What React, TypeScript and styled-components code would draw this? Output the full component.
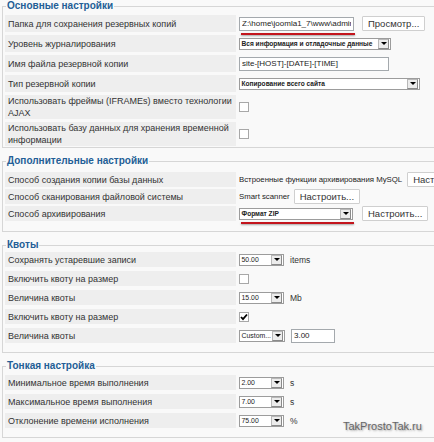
import React from "react";
import styled, { createGlobalStyle } from "styled-components";

const GlobalStyle = createGlobalStyle`
  html, body {
    margin: 0;
    padding: 0;
    background: #f9f9f9;
    overflow: hidden;
  }
  body {
    font-family: "Liberation Sans", Arial, sans-serif;
  }
`;

const Page = styled.div`
  position: relative;
  width: 480px;
  height: 442px;
  padding-left: 2px;
`;

const Fieldset = styled.fieldset<{ $pt: number; $pb: number }>`
  margin: 0 0 7px 0;
  padding: ${(p) => p.$pt}px 0 ${(p) => p.$pb}px 2px;
  border: 1px solid #d6d6d6;
  min-width: 0;
`;

const Legend = styled.legend`
  padding: 0 1px;
  margin-left: 1px;
  font: bold 10px/12px "Liberation Sans", Arial, sans-serif;
  color: #235e96;
`;

const Rows = styled.div<{ $gap: number }>`
  display: flex;
  flex-direction: column;
  gap: ${(p) => p.$gap}px;
`;

const Row = styled.div<{ $h: number }>`
  display: grid;
  grid-template-columns: 231px 1fr;
  column-gap: 3px;
  min-height: ${(p) => p.$h}px;
`;

const Label = styled.div`
  display: flex;
  align-items: center;
  padding: 0 3px;
  background: #eeeeee;
  font-size: 9px;
  line-height: 12px;
  color: #333;
`;

const Value = styled.div<{ $gap?: number }>`
  display: flex;
  align-items: center;
  gap: ${(p) => p.$gap ?? 6}px;
  font-size: 7.8px;
  color: #222;
  white-space: nowrap;
`;

const Marked = styled.span`
  position: relative;
  display: inline-flex;
`;

const RedLine = styled.span<{ $offset: number }>`
  position: absolute;
  left: 2px;
  right: -1px;
  bottom: -${(p) => p.$offset}px;
  height: 2px;
  background: #c3141c;
  box-shadow: 0 1px 2px rgba(0, 0, 0, 0.35);
`;

const TextInput = styled.input<{ $w: number }>`
  box-sizing: border-box;
  width: ${(p) => p.$w}px;
  height: 14px;
  margin: 0;
  padding: 0 2px;
  border: 1px solid #a4a9ad;
  background: #fff;
  font: 8px "Liberation Sans", Arial, sans-serif;
  color: #222;
  outline: none;
`;

const Button = styled.button`
  box-sizing: border-box;
  height: 15px;
  margin: 0;
  padding: 0 5px;
  border: 1px solid #cfcfcf;
  border-radius: 1px;
  background: #fff;
  font: 9.5px/13px "Liberation Sans", Arial, sans-serif;
  color: #333;
  white-space: nowrap;
`;

const SelectBox = styled.div<{ $w: number }>`
  box-sizing: border-box;
  display: flex;
  width: ${(p) => p.$w}px;
  height: 12px;
  border: 1px solid #9c9c9c;
  background: #fff;
`;

const SelectText = styled.span<{ $bold?: boolean }>`
  flex: 1;
  overflow: hidden;
  padding-left: 1.5px;
  font: ${(p) => (p.$bold ? "bold 6.6px" : "6.9px")} / 10px "Liberation Sans", Arial, sans-serif;
  color: #222;
`;

const SelectArrow = styled.span`
  box-sizing: border-box;
  display: flex;
  align-items: center;
  justify-content: center;
  flex-shrink: 0;
  width: 11px;
  margin: 0 1px 0 0;
  border: 1px solid #8a8a8a;
  border-top-color: #b8b8b8;
  border-left-color: #b8b8b8;
  background: #ececec;

  &::after {
    content: "";
    border-left: 3px solid transparent;
    border-right: 3px solid transparent;
    border-top: 3px solid #000;
  }
`;

const Check = styled.span`
  box-sizing: border-box;
  display: inline-flex;
  align-items: center;
  justify-content: center;
  width: 10px;
  height: 10px;
  border: 1px solid #a8a8a8;
  background: #fff;
`;

const Unit = styled.span`
  font-size: 8.5px;
  color: #333;
`;

const Watermark = styled.div`
  position: absolute;
  left: 343px;
  top: 420px;
  font: 11px "Liberation Sans", Arial, sans-serif;
  color: #666;
  text-shadow: 1px 1px 2px rgba(0, 0, 0, 0.35);
`;

const Select = ({ w, text, bold }: { w: number; text: string; bold?: boolean }) => (
  <SelectBox $w={w}>
    <SelectText $bold={bold}>{text}</SelectText>
    <SelectArrow />
  </SelectBox>
);

const Checkbox = ({ checked }: { checked?: boolean }) => (
  <Check>
    {checked && (
      <svg width="8" height="8" viewBox="0 0 8 8">
        <path d="M1 4 L3 6.2 L7 1.5" fill="none" stroke="#000" strokeWidth="1.8" />
      </svg>
    )}
  </Check>
);

export default function App() {
  return (
    <>
      <GlobalStyle />
      <Page>
        <Fieldset $pt={3} $pb={1}>
          <Legend>Основные настройки</Legend>
          <Rows $gap={3}>
            <Row $h={17}>
              <Label>Папка для сохранения резервных копий</Label>
              <Value $gap={8}>
                <Marked>
                  <TextInput $w={115} defaultValue="Z:\home\joomla1_7\www\administrator" readOnly />
                  <RedLine $offset={4} />
                </Marked>
                <Button>Просмотр...</Button>
              </Value>
            </Row>
            <Row $h={17}>
              <Label>Уровень журналирования</Label>
              <Value>
                <Select w={152} bold text="Вся информация и отладочные данные" />
              </Value>
            </Row>
            <Row $h={17}>
              <Label>Имя файла резервной копии</Label>
              <Value>
                <TextInput $w={150} defaultValue="site-[HOST]-[DATE]-[TIME]" readOnly />
              </Value>
            </Row>
            <Row $h={17}>
              <Label>Тип резервной копии</Label>
              <Value>
                <Select w={181} bold text="Копирование всего сайта" />
              </Value>
            </Row>
            <Row $h={24}>
              <Label>Использовать фреймы (IFRAMEs) вместо технологии AJAX</Label>
              <Value>
                <Checkbox />
              </Value>
            </Row>
            <Row $h={24}>
              <Label>Использовать базу данных для хранения временной информации</Label>
              <Value>
                <Checkbox />
              </Value>
            </Row>
          </Rows>
        </Fieldset>

        <Fieldset $pt={5} $pb={10}>
          <Legend>Дополнительные настройки</Legend>
          <Rows $gap={2}>
            <Row $h={14}>
              <Label>Способ создания копии базы данных</Label>
              <Value $gap={5}>
                <span>Встроенные функции архивирования MySQL</span>
                <Button>Настроить...</Button>
              </Value>
            </Row>
            <Row $h={14}>
              <Label>Способ сканирования файловой системы</Label>
              <Value $gap={4}>
                <span>Smart scanner</span>
                <Button>Настроить...</Button>
              </Value>
            </Row>
            <Row $h={14}>
              <Label>Способ архивирования</Label>
              <Value $gap={9}>
                <Marked>
                  <Select w={114} bold text="Формат ZIP" />
                  <RedLine $offset={4} />
                </Marked>
                <Button>Настроить...</Button>
              </Value>
            </Row>
          </Rows>
        </Fieldset>

        <Fieldset $pt={1} $pb={9}>
          <Legend>Квоты</Legend>
          <Rows $gap={4}>
            <Row $h={15}>
              <Label>Сохранять устаревшие записи</Label>
              <Value>
                <Select w={45} text="50.00" />
                <Unit>items</Unit>
              </Value>
            </Row>
            <Row $h={15}>
              <Label>Включить квоту на размер</Label>
              <Value>
                <Checkbox />
              </Value>
            </Row>
            <Row $h={15}>
              <Label>Величина квоты</Label>
              <Value>
                <Select w={45} text="15.00" />
                <Unit>Mb</Unit>
              </Value>
            </Row>
            <Row $h={15}>
              <Label>Включить квоту на размер</Label>
              <Value>
                <Checkbox checked />
              </Value>
            </Row>
            <Row $h={15}>
              <Label>Величина квоты</Label>
              <Value $gap={6}>
                <Select w={46} text="Custom..." />
                <TextInput $w={44} defaultValue="3.00" readOnly />
              </Value>
            </Row>
          </Rows>
        </Fieldset>

        <Fieldset $pt={3} $pb={9}>
          <Legend>Тонкая настройка</Legend>
          <Rows $gap={4}>
            <Row $h={15}>
              <Label>Минимальное время выполнения</Label>
              <Value>
                <Select w={45} text="2.00" />
                <Unit>s</Unit>
              </Value>
            </Row>
            <Row $h={15}>
              <Label>Максимальное время выполнения</Label>
              <Value>
                <Select w={45} text="7.00" />
                <Unit>s</Unit>
              </Value>
            </Row>
            <Row $h={15}>
              <Label>Отклонение времени исполнения</Label>
              <Value>
                <Select w={45} text="75.00" />
                <Unit>%</Unit>
              </Value>
            </Row>
          </Rows>
        </Fieldset>

        <Watermark>TakProstoTak.ru</Watermark>
      </Page>
    </>
  );
}
